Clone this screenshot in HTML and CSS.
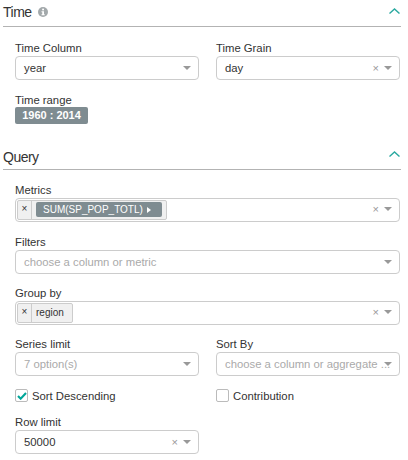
FILE: index.html
```html
<!DOCTYPE html>
<html lang="en">
<head>
  <meta charset="UTF-8" />
  <title>Controls</title>
  <link rel="stylesheet" href="styles.css">
</head>
<body>
  <div class="panel-head panel-head-time">
    <span class="panel-title">Time</span>
    <svg class="info" width="10" height="10" viewBox="0 0 12 12"><circle cx="6" cy="6" r="6" fill="#a3a9ab"/><rect x="5" y="2" width="2.2" height="2" fill="#fff"/><path d="M4.2 5h3v3.8h.9V10H4.2V8.8h.9V6.2h-.9z" fill="#fff"/></svg>
    <svg class="chevron" width="11" height="6" viewBox="0 0 11 6"><path d="M.5 5.5l5-4.5 5 4.5" fill="none" stroke="#2aa9a0" stroke-width="1.4"/></svg>
  </div>
  <div class="panel-body panel-body-time">
    <div class="row">
      <div class="field">
        <label>Time Column</label>
        <div class="select"><span class="value">year</span><span class="arrow"></span></div>
      </div>
      <div class="field">
        <label>Time Grain</label>
        <div class="select"><span class="value">day</span><span class="clear">×</span><span class="arrow"></span></div>
      </div>
    </div>
    <div class="field field-range">
      <label class="label-flush">Time range</label>
      <span class="range-badge">1960 : 2014</span>
    </div>
  </div>

  <div class="panel-head panel-head-query">
    <span class="panel-title">Query</span>
    <svg class="chevron" width="11" height="6" viewBox="0 0 11 6"><path d="M.5 5.5l5-4.5 5 4.5" fill="none" stroke="#2aa9a0" stroke-width="1.4"/></svg>
  </div>
  <div class="panel-body">
    <div class="field">
      <label>Metrics</label>
      <div class="select select-multi">
        <span class="tag">
          <span class="tag-x">×</span>
          <span class="tag-text"><span class="metric">SUM(SP_POP_TOTL)<i class="caret"></i></span></span>
        </span>
        <span class="clear">×</span><span class="arrow"></span>
      </div>
    </div>
    <div class="field field-tight">
      <label>Filters</label>
      <div class="select"><span class="value placeholder">choose a column or metric</span><span class="arrow"></span></div>
    </div>
    <div class="field field-tight">
      <label>Group by</label>
      <div class="select select-multi">
        <span class="tag">
          <span class="tag-x">×</span>
          <span class="tag-text tag-text-plain">region</span>
        </span>
        <span class="clear">×</span><span class="arrow"></span>
      </div>
    </div>
    <div class="row">
      <div class="field field-limit">
        <label>Series limit</label>
        <div class="select"><span class="value placeholder">7 option(s)</span><span class="arrow"></span></div>
      </div>
      <div class="field field-limit">
        <label>Sort By</label>
        <div class="select"><span class="value placeholder">choose a column or aggregate ...</span><span class="arrow"></span></div>
      </div>
    </div>
    <div class="row row-checks">
      <div class="check">
        <span class="box">
          <svg width="10" height="8" viewBox="0 0 11 9"><path d="M1 4.5l3 3L10 1.2" fill="none" stroke="#00a699" stroke-width="2.4"/></svg>
        </span>
        Sort Descending
      </div>
      <div class="check"><span class="box"></span>Contribution</div>
    </div>
    <div class="row">
      <div class="field">
        <label>Row limit</label>
        <div class="select"><span class="value">50000</span><span class="clear">×</span><span class="arrow"></span></div>
      </div>
    </div>
  </div>
</body>
</html>
```

FILE: styles.css
```css
body {
  margin: 0;
  width: 408px;
  height: 460px;
  overflow: hidden;
  background: #fff;
  font-family: "Liberation Sans", Arial, sans-serif;
  font-size: 11.3px;
  color: #333;
}

.panel-head {
  display: flex;
  align-items: center;
  height: 24px;
  margin-left: 3px;
  width: 398px;
  border-bottom: 1px solid #b3b3b3;
}

.panel-head-time {
  padding-bottom: 2px;
}

.panel-head-query {
  margin-top: 21px;
}

.panel-title {
  font-size: 14px;
  letter-spacing: -0.5px;
  color: #333;
}

.info {
  margin-left: 6px;
}

.chevron {
  align-self: flex-start;
  margin-left: auto;
  margin-right: 1px;
  margin-top: 8px;
}

.panel-head-query .chevron {
  margin-top: 6px;
}

.panel-body {
  padding: 12px 8px 0 15px;
  width: 385px;
}

.panel-body-time {
  padding-top: 13px;
}

.row {
  display: flex;
  gap: 17px;
}

.row .field {
  width: 184px;
}

.field {
  margin-bottom: 12px;
}

.field-tight {
  margin-bottom: 11px;
}

.field-range {
  margin-bottom: 0;
}

.field-limit {
  margin-bottom: 13px;
}

label {
  display: block;
  height: 16px;
  line-height: 16px;
  color: #333;
}

.label-flush {
  height: 15px;
}

.select {
  display: flex;
  align-items: center;
  height: 24px;
  box-sizing: border-box;
  border: 1px solid #ccc;
  border-radius: 4px;
  padding: 0 7px 0 8px;
  background: #fff;
}

.select-multi {
  padding-left: 1px;
  align-items: flex-start;
}

.value {
  flex: 1;
  min-width: 0;
  white-space: nowrap;
  color: #333;
}

.placeholder {
  color: #aaa;
}

.clear {
  margin-left: auto;
  margin-right: 5px;
  color: #999;
  font-size: 11px;
  line-height: 21px;
}

.arrow {
  flex: none;
  width: 0;
  height: 0;
  border-left: 4px solid transparent;
  border-right: 4px solid transparent;
  border-top: 4px solid #999;
}

.select-multi .arrow {
  margin-top: 8px;
}

.tag {
  display: flex;
  align-items: stretch;
  height: 20px;
  margin-top: 1px;
  background: #f0f0f0;
  border: 1px solid #ccc;
  border-radius: 2px;
  box-sizing: border-box;
  font-size: 10px;
}

.tag-x {
  width: 13px;
  text-align: center;
  line-height: 15px;
  color: #333;
  border-right: 1px solid #ccc;
}

.tag-text {
  display: flex;
  align-items: flex-start;
  padding: 0 4px;
  color: #333;
}

.tag-text-plain {
  padding-right: 8px;
  line-height: 18px;
}

.metric {
  display: flex;
  align-items: center;
  height: 15px;
  margin-top: 1px;
  padding: 0 11px 0 7px;
  background: #7f8c91;
  border-radius: 2px;
  color: #fff;
}

.caret {
  margin-left: 4px;
  border-left: 4px solid #fff;
  border-top: 3.5px solid transparent;
  border-bottom: 3.5px solid transparent;
}

.range-badge {
  display: block;
  width: 73px;
  height: 17px;
  line-height: 16px;
  text-align: center;
  background: #7f8c91;
  border-radius: 2px;
  color: #fff;
  font-weight: bold;
  font-size: 11px;
}

.row-checks {
  margin-bottom: 12px;
}

.check {
  display: flex;
  align-items: center;
  width: 184px;
  height: 13px;
  color: #333;
}

.box {
  display: flex;
  align-items: center;
  justify-content: center;
  box-sizing: border-box;
  width: 13px;
  height: 13px;
  margin-right: 4px;
  border: 1px solid #bbb;
  border-radius: 2px;
  flex: none;
}
```
